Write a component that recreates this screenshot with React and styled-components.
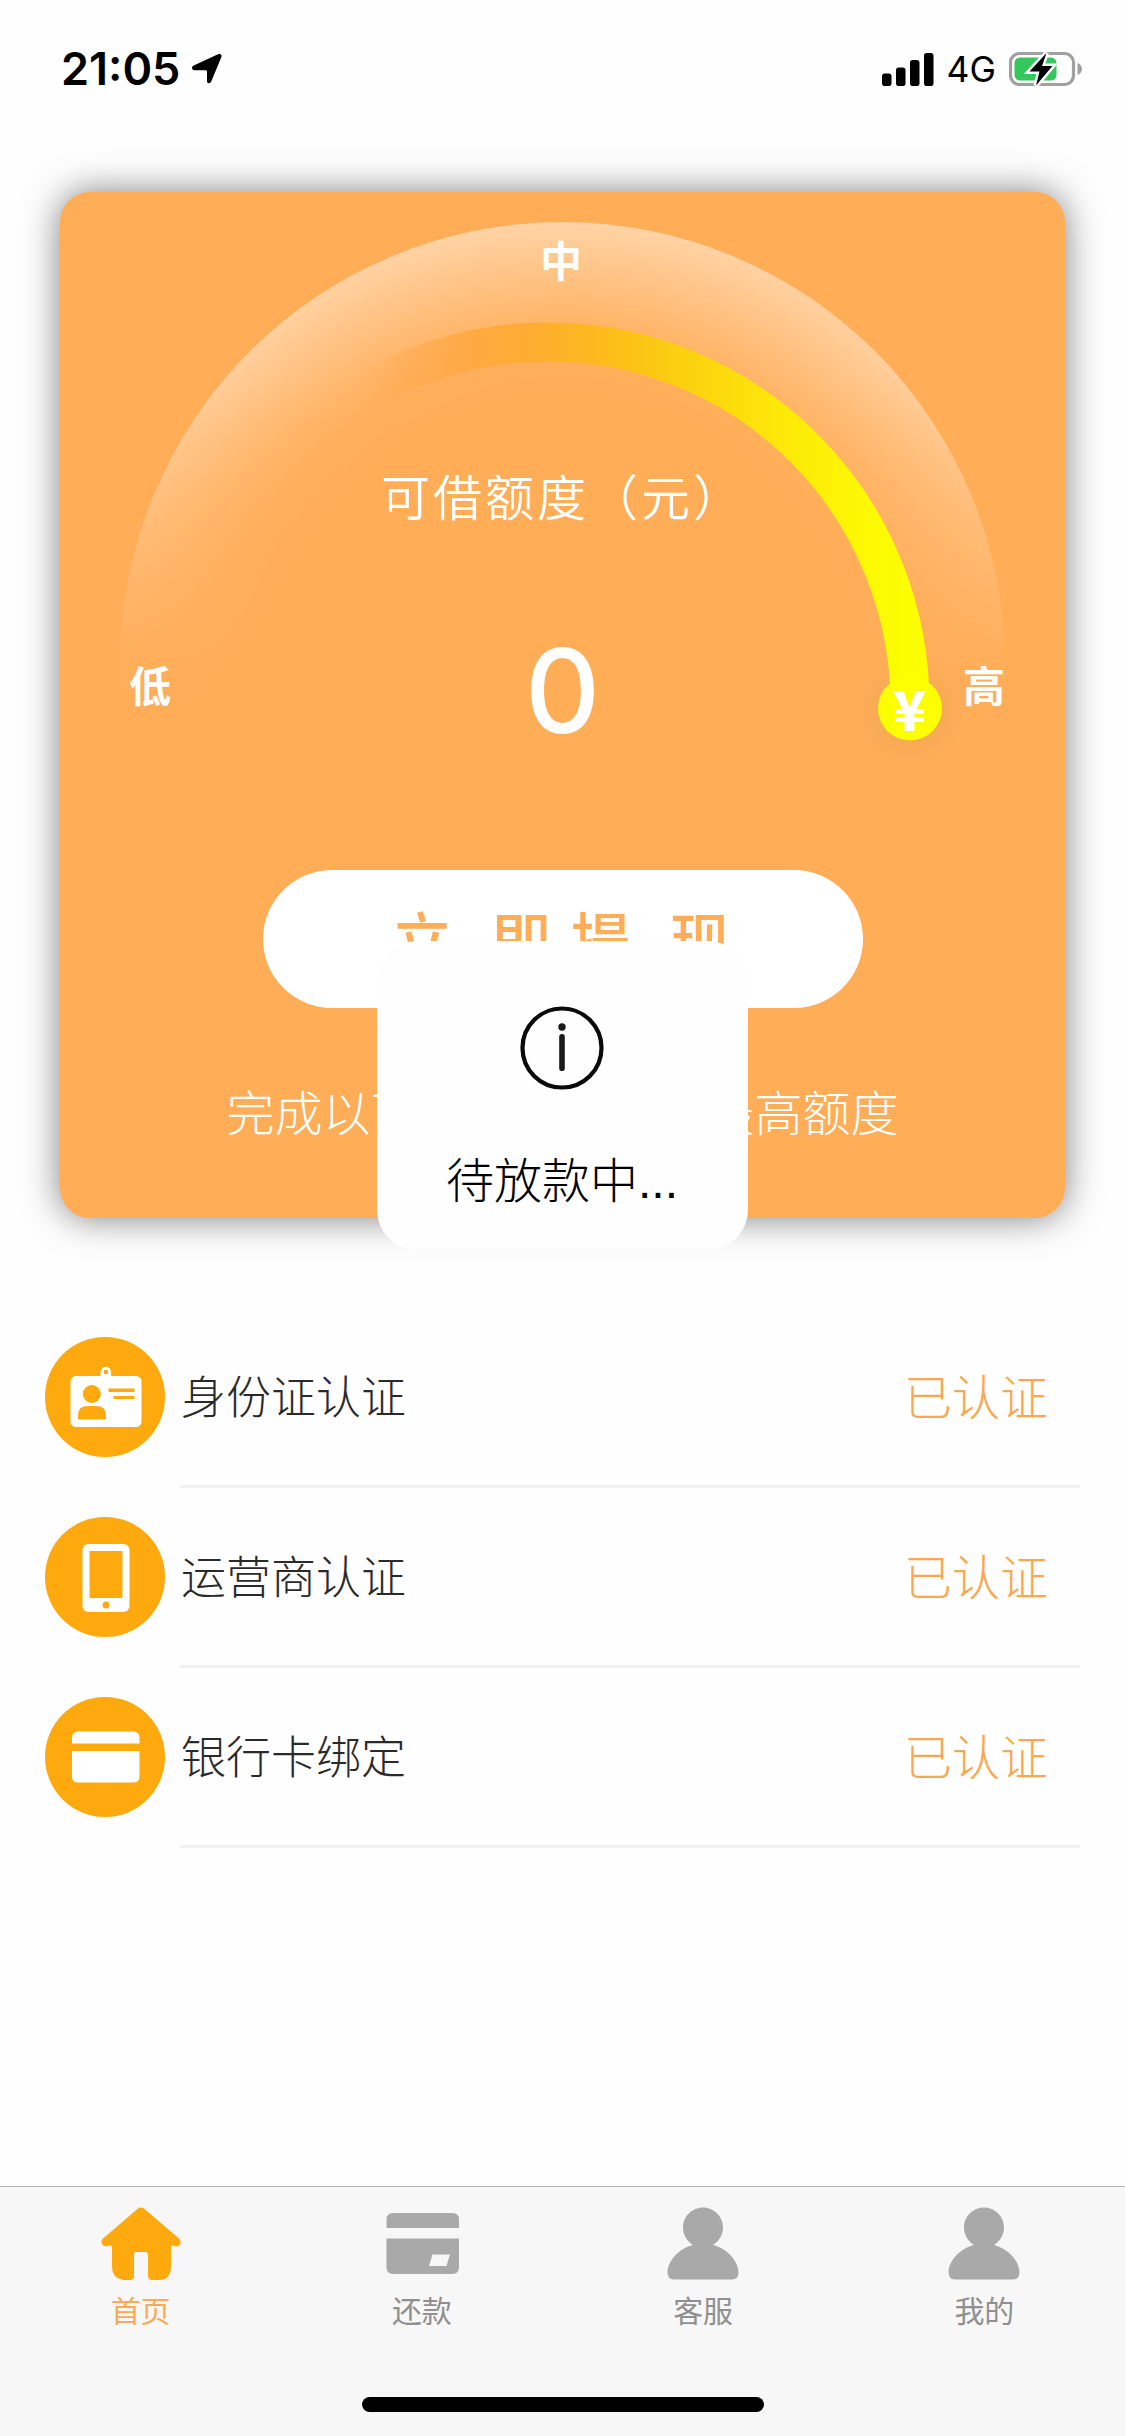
import React from "react";
import styled, { createGlobalStyle } from "styled-components";

const GlobalStyle = createGlobalStyle`
  * { box-sizing: border-box; }
  body {
    margin: 0;
    background: #fefefe;
    font-family: Inter, "Noto Sans CJK SC", sans-serif;
  }
`;

const Screen = styled.div`
  width: 1125px;
  height: 2436px;
  position: relative;
  display: flex;
  flex-direction: column;
  background: #fefefe;
  overflow: hidden;
`;

const StatusBar = styled.header`
  height: 132px;
  flex: none;
  display: flex;
  align-items: center;
  justify-content: space-between;
  padding: 6px 42px 0 61px;
  color: #000;
`;

const StatusGroup = styled.div`
  display: flex;
  align-items: center;
  gap: ${(p) => p.$gap}px;
`;

const Clock = styled.span`
  font-size: 45px;
  font-weight: 600;
  line-height: 60px;
`;

const Network = styled.span`
  font-size: 35.5px;
  line-height: 60px;
  padding-top: 2px;
`;

const QuotaCard = styled.section`
  flex: none;
  margin: 60px 60px 0;
  height: 1026px;
  border-radius: 30px;
  background: #ffad57;
  box-shadow: 0 0 36px rgba(0, 0, 0, 0.5);
  color: #fff;
  display: flex;
  flex-direction: column;
  align-items: center;
`;

const Gauge = styled.div`
  position: relative;
  width: 1005px;
  height: 678px;
  flex: none;
  display: flex;
  flex-direction: column;
  align-items: center;
`;

const GaugeArt = styled.svg`
  position: absolute;
  inset: 0;
  width: 1005px;
  height: 678px;
`;

const Level = styled.span`
  position: absolute;
  left: ${(p) => p.$x}px;
  top: ${(p) => p.$y}px;
  font-size: 42px;
  line-height: 60px;
  font-weight: 700;
`;

const QuotaTitle = styled.h1`
  position: relative;
  margin: 267px 0 0;
  padding-left: 1px;
  font-family: "Noto Sans CJK SC", sans-serif;
  font-size: 49px;
  line-height: 72px;
  font-weight: 350;
  letter-spacing: 3px;
`;

const QuotaValue = styled.div`
  position: relative;
  margin-top: 85px;
  font-size: 117px;
  line-height: 150px;
  font-weight: 500;
`;

const WithdrawButton = styled.button`
  flex: none;
  width: 600px;
  height: 138px;
  border: 0;
  border-radius: 69px;
  background: #fff;
  color: #ffad57;
  display: flex;
  align-items: center;
  justify-content: center;
  gap: 20px;
  padding: 0 3px 4px 0;
  font-family: "Noto Sans CJK SC", sans-serif;
  font-size: 60px;
  line-height: 88px;
  font-weight: 500;
`;

const WordPair = styled.span`
  display: flex;
  gap: 39px;
`;

const Hint = styled.p`
  margin: 66px 0 0;
  font-family: "Noto Sans CJK SC", sans-serif;
  font-size: 48px;
  line-height: 72px;
  font-weight: 300;
  white-space: nowrap;
`;

const Toast = styled.div`
  position: absolute;
  left: 377px;
  top: 941px;
  width: 371px;
  height: 309px;
  border-radius: 40px;
  background: #fefefe;
  display: flex;
  flex-direction: column;
  align-items: center;
  padding: 65px 1px 0 0;
`;

const ToastText = styled.div`
  margin-top: 56px;
  font-family: "Liberation Sans", "Noto Sans CJK SC", sans-serif;
  font-size: 48px;
  line-height: 72px;
  font-weight: 300;
  color: #000;
  white-space: nowrap;
`;

const CheckList = styled.ul`
  list-style: none;
  margin: 90px 45px 0;
  padding: 0;
`;

const CheckRow = styled.li`
  height: 180px;
  display: flex;
  align-items: stretch;
  gap: 15px;
`;

const CheckIcon = styled.div`
  display: flex;
  align-items: center;
  padding-bottom: 3px;
`;

const CheckBody = styled.div`
  flex: 1;
  display: flex;
  align-items: center;
  justify-content: space-between;
  padding: 0 32px 0 1px;
  border-bottom: 3px solid #f1f1f1;
  font-family: "Noto Sans CJK SC", sans-serif;
  font-weight: 300;
`;

const CheckLabel = styled.span`
  padding-bottom: 4px;
  font-size: 45px;
  color: #2a2a2a;
`;

const CheckState = styled.span`
  padding-bottom: 5px;
  font-size: 48px;
  color: #f9a850;
`;

const TabBar = styled.nav`
  flex: none;
  margin-top: auto;
  height: 250px;
  border-top: 1px solid #b2b2b2;
  background: #f7f7f7;
  display: flex;
  flex-direction: column;
  justify-content: space-between;
  align-items: center;
  padding-bottom: 24px;
`;

const Tabs = styled.div`
  width: 100%;
  display: grid;
  grid-template-columns: repeat(4, 1fr);
`;

const Tab = styled.div`
  display: flex;
  flex-direction: column;
  align-items: center;
  padding-top: 18px;
  color: ${(p) => (p.$active ? "#fbaa55" : "#8f8f8f")};
  font-family: "Noto Sans CJK SC", sans-serif;
  font-size: 30px;
  line-height: 44px;
  font-weight: 400;

  svg { margin-bottom: 6px; }
`;

const HomeIndicator = styled.div`
  width: 402px;
  height: 15px;
  border-radius: 8px;
  background: #000;
`;

const LocationArrow = () => (
  <svg width="31" height="32" viewBox="0 0 31 32">
    <path d="M27 1.300 C29.700 .2 31.300 1.900 30.200 4.500 L20.200 28.600 C19.200 31 16 30.800 16 28 V18.500 Q16 17.200 14.700 17.200 H3.500 C.6 17.200 .2 13.600 2.700 12.500 Z" fill="#000" />
  </svg>
);

const Signal = () => (
  <svg width="52" height="33" viewBox="0 0 52 33">
    <rect x="0" y="20.500" width="9.500" height="12.500" rx="2.800" />
    <rect x="14" y="14.500" width="9.500" height="18.500" rx="2.800" />
    <rect x="28" y="7" width="9.500" height="26" rx="2.800" />
    <rect x="42" y="0" width="9.500" height="33" rx="2.800" />
  </svg>
);

const Battery = () => (
  <svg width="74" height="36" viewBox="0 0 74 36">
    <rect x="1.500" y="2.500" width="63" height="31" rx="9" fill="none" stroke="#a0a0a0" strokeWidth="3.200" />
    <path d="M68.500 12 C74.500 14 74.500 22 68.500 24 Z" fill="#a0a0a0" />
    <rect x="5.500" y="6.500" width="42" height="23" rx="5.500" fill="#35c759" />
    <path d="M37.500 2 L20.500 20.500 H30.500 L27 34.500 L43.500 15 H33 Z" fill="#000" stroke="#fff" strokeWidth="5" paintOrder="stroke" />
  </svg>
);

const GaugeDrawing = () => (
  <GaugeArt viewBox="60 192 1005 678">
    <defs>
      <radialGradient id="domeGlow" gradientUnits="userSpaceOnUse" cx="562.500" cy="664.500" r="442.500">
        <stop offset="0.600" stopColor="#fff" stopOpacity="0" />
        <stop offset="0.700" stopColor="#fff" stopOpacity="0.035" />
        <stop offset="0.780" stopColor="#fff" stopOpacity="0.130" />
        <stop offset="0.880" stopColor="#fff" stopOpacity="0.290" />
        <stop offset="1" stopColor="#fff" stopOpacity="0.470" />
      </radialGradient>
      <linearGradient id="domeFade" gradientUnits="userSpaceOnUse" x1="0" y1="222" x2="0" y2="740">
        <stop offset="0" stopColor="#fff" />
        <stop offset="0.300" stopColor="#fff" stopOpacity="0.850" />
        <stop offset="0.600" stopColor="#fff" stopOpacity="0.400" />
        <stop offset="0.850" stopColor="#fff" stopOpacity="0.050" />
        <stop offset="1" stopColor="#fff" stopOpacity="0" />
      </linearGradient>
      <mask id="domeMask" maskUnits="userSpaceOnUse" x="60" y="192" width="1005" height="678">
        <rect x="60" y="192" width="1005" height="548" fill="url(#domeFade)" />
      </mask>
      <linearGradient id="arcTone" gradientUnits="userSpaceOnUse" x1="340" y1="0" x2="920" y2="0">
        <stop offset="0.040" stopColor="#ffa84a" stopOpacity="0" />
        <stop offset="0.160" stopColor="#ffa94a" stopOpacity="0.700" />
        <stop offset="0.240" stopColor="#fea940" />
        <stop offset="0.345" stopColor="#fdad2e" />
        <stop offset="0.480" stopColor="#fcbf18" />
        <stop offset="0.590" stopColor="#fbd00f" />
        <stop offset="0.760" stopColor="#fde809" />
        <stop offset="0.910" stopColor="#fcf902" />
        <stop offset="1" stopColor="#fbff00" />
      </linearGradient>
      <radialGradient id="knobGlow">
        <stop offset="0.550" stopColor="#eca650" stopOpacity="0.450" />
        <stop offset="1" stopColor="#f0a552" stopOpacity="0" />
      </radialGradient>
    </defs>
    <circle cx="562.500" cy="664.500" r="442.500" fill="url(#domeGlow)" mask="url(#domeMask)" />
    <circle cx="910" cy="712" r="54" fill="url(#knobGlow)" />
    <path d="M186 704 A362 362 0 0 1 910 704" fill="none" stroke="url(#arcTone)" strokeWidth="39" />
    <circle cx="910" cy="708.500" r="32" fill="#fbff00" />
    <text x="909.500" y="731" textAnchor="middle" fontFamily="'Noto Sans CJK SC', sans-serif" fontSize="55" fontWeight="900" fill="#fff">¥</text>
  </GaugeArt>
);

const InfoIcon = () => (
  <svg width="84" height="84" viewBox="0 0 84 84">
    <circle cx="42" cy="42" r="39.500" fill="none" stroke="#0a0a0a" strokeWidth="4.200" />
    <circle cx="42" cy="21" r="3.700" fill="#1a1a1a" />
    <rect x="39.200" y="28" width="5.600" height="37" rx="2.800" fill="#1a1a1a" />
  </svg>
);

const IdBadgeIcon = () => (
  <svg width="120" height="120" viewBox="0 0 120 120">
    <circle cx="60" cy="60" r="60" fill="#fea90d" />
    <path d="M55.500 40 V35 a5.300 5.300 0 0 1 10.600 0 V40" fill="#fff" />
    <rect x="25.500" y="39" width="71" height="51" rx="5.500" fill="#fff" />
    <g fill="#fea90d">
      <circle cx="60.800" cy="35" r="2.300" />
      <circle cx="46.800" cy="57" r="9" />
      <path d="M33 82.500 V78 Q33 69 43 69 H51 Q61 69 61 78 V82.500 Z" />
      <rect x="63.500" y="51.500" width="26" height="3.500" />
      <rect x="68.500" y="59" width="21" height="3" />
    </g>
  </svg>
);

const PhoneIcon = () => (
  <svg width="120" height="120" viewBox="0 0 120 120">
    <circle cx="60" cy="60" r="60" fill="#fea90d" />
    <rect x="37.500" y="27" width="47" height="68" rx="6" fill="#fff" />
    <rect x="44.500" y="34" width="33" height="47" fill="#fea90d" />
    <circle cx="61" cy="88" r="3.500" fill="#fea90d" />
  </svg>
);

const BankCardIcon = () => (
  <svg width="120" height="120" viewBox="0 0 120 120">
    <circle cx="60" cy="60" r="60" fill="#fea90d" />
    <path d="M27 46.500 V41 Q27 34.500 33.500 34.500 H88 Q94.500 34.500 94.500 41 V46.500 Z M27 54 H94.500 V79.500 Q94.500 85.500 88 85.500 H33.500 Q27 85.500 27 79.500 Z" fill="#fff" />
  </svg>
);

const HomeIcon = () => (
  <svg width="80" height="76" viewBox="0 0 80 76">
    <path d="M37 3.600 Q40 1.500 43 3.600 L78 33.500 Q80.500 36 79 39.500 Q76.500 43 72 40.500 Q70 39.500 70 43 V61 Q70 75 58 75 H51 Q47 75 47 70.500 V49.500 Q47 47 44.500 47 H35.500 Q33 47 33 49.500 V70.500 Q33 75 29 75 H22 Q11 73 11 62 V43 Q11 39.500 8 40.500 Q3 42.500 1 39 Q-.5 36 2 33.500 Z" fill="#fea90d" />
  </svg>
);

const RepayIcon = () => (
  <svg width="80" height="76" viewBox="0 0 80 76">
    <path d="M4.500 23 V14.500 Q4.500 8 11 8 H70.500 Q77 8 77 14.500 V23 Z" fill="#a9a9a9" />
    <path fillRule="evenodd" d="M4.500 33.500 H77 V62.500 Q77 69 70.500 69 H11 Q4.500 69 4.500 62.500 Z M50.500 49.500 L47 61 H64.500 L68 49.500 Z" fill="#a9a9a9" />
  </svg>
);

const PersonIcon = () => (
  <svg width="80" height="76" viewBox="0 0 80 76">
    <path d="M40 2.500 C51 2.500 60 11.500 60 22.500 C60 30 56 36 50 40 C65 44 75 56 75.500 67 Q75.500 74.500 69 74.500 H11 Q4.500 74.500 4.500 67 C5 56 15 44 30 40 C24 36 20 30 20 22.500 C20 11.500 29 2.500 40 2.500 Z" fill="#a9a9a9" />
  </svg>
);

const checks = [
  { label: "身份证认证", Icon: IdBadgeIcon },
  { label: "运营商认证", Icon: PhoneIcon },
  { label: "银行卡绑定", Icon: BankCardIcon },
];

const tabs = [
  { label: "首页", Icon: HomeIcon, active: true },
  { label: "还款", Icon: RepayIcon },
  { label: "客服", Icon: PersonIcon },
  { label: "我的", Icon: PersonIcon },
];

export default function App() {
  return (
    <Screen>
      <GlobalStyle />
      <StatusBar>
        <StatusGroup $gap={11}>
          <Clock>21:05</Clock>
          <LocationArrow />
        </StatusGroup>
        <StatusGroup $gap={13}>
          <Signal />
          <Network>4G</Network>
          <Battery />
        </StatusGroup>
      </StatusBar>

      <QuotaCard>
        <Gauge>
          <GaugeDrawing />
          <Level $x={480} $y={40}>中</Level>
          <Level $x={69} $y={465}>低</Level>
          <Level $x={903} $y={465}>高</Level>
          <QuotaTitle>可借额度（元）</QuotaTitle>
          <QuotaValue>0</QuotaValue>
        </Gauge>
        <WithdrawButton>
          <WordPair><span>立</span><span>即</span></WordPair>
          <WordPair><span>提</span><span>现</span></WordPair>
        </WithdrawButton>
        <Hint>完成以下认证即可获得最高额度</Hint>
      </QuotaCard>

      <CheckList>
        {checks.map(({ label, Icon }) => (
          <CheckRow key={label}>
            <CheckIcon><Icon /></CheckIcon>
            <CheckBody>
              <CheckLabel>{label}</CheckLabel>
              <CheckState>已认证</CheckState>
            </CheckBody>
          </CheckRow>
        ))}
      </CheckList>

      <TabBar>
        <Tabs>
          {tabs.map(({ label, Icon, active }) => (
            <Tab key={label} $active={active}>
              <Icon />
              {label}
            </Tab>
          ))}
        </Tabs>
        <HomeIndicator />
      </TabBar>

      <Toast>
        <InfoIcon />
        <ToastText>待放款中...</ToastText>
      </Toast>
    </Screen>
  );
}
